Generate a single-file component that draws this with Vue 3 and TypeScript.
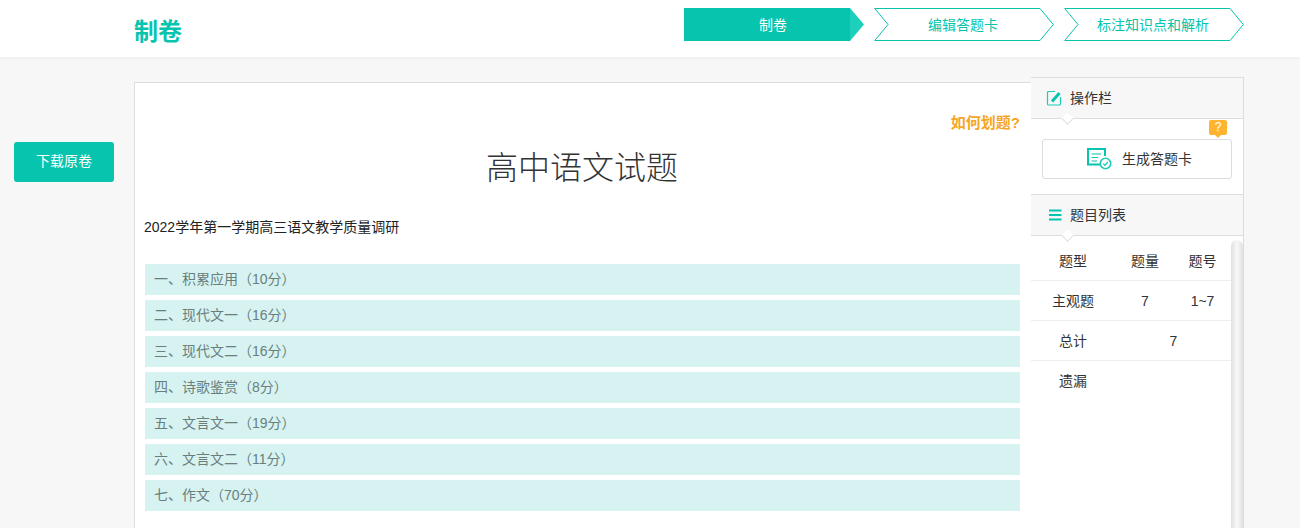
<template>
  <div class="page">
    <header class="top">
      <h1 class="logo">制卷</h1>
      <ol class="steps">
        <li v-for="(s, i) in steps" :key="s" class="step" :class="{ on: i === 0 }">
          <svg v-if="i === 0" class="shape" viewBox="0 0 180 33" width="180" height="33">
            <rect x="0" y="0" width="166" height="33" fill="#06c4ae" />
            <path d="M166 0 L180 16.5 L166 33 Z" fill="#1dd0bb" />
          </svg>
          <svg v-else class="shape" viewBox="0 0 180 33" width="180" height="33">
            <path d="M.7 .5 H166 L179.3 16.5 L166 32.5 H.7 L14 16.5 Z" fill="#fff" stroke="#06c4ae" />
          </svg>
          <span class="step-text">{{ s }}</span>
        </li>
      </ol>
    </header>

    <main class="body">
      <div class="left">
        <button class="download"><span>下载原卷</span></button>
      </div>

      <section class="paper">
        <a class="how">如何划题?</a>
        <h2 class="title">高中语文试题</h2>
        <p class="sub">2022学年第一学期高三语文教学质量调研</p>
        <div class="parts">
          <div v-for="p in parts" :key="p" class="part">{{ p }}</div>
        </div>
      </section>

      <aside class="side">
        <div class="side-head">
          <svg class="ico" width="16" height="16" viewBox="0 0 16 16">
            <path d="M9 1.5 H2.5 A1 1 0 0 0 1.5 2.5 V14 A1 1 0 0 0 2.5 15 H13.5 A1 1 0 0 0 14.5 14 V7" fill="none" stroke="#1dcdb9" stroke-width="1.2" />
            <path d="M6 11.5 L13.5 3" stroke="#06c4ae" stroke-width="3" />
          </svg>
          <span class="head-text">操作栏</span>
        </div>
        <div class="action">
          <span class="tip">?</span>
          <button class="make">
            <svg width="25" height="22" viewBox="0 0 25 22">
              <path d="M15 16.5 H1 V1 H18 V8" fill="none" stroke="#06c4ae" stroke-width="2" />
              <path d="M4.5 6 H14 M4.5 9.5 H11 M4.5 13 H10" stroke="#06c4ae" stroke-width="1.2" />
              <circle cx="18.5" cy="15.5" r="5.2" fill="#fff" stroke="#1dcdb9" stroke-width="1.6" />
              <path d="M16.3 15.6 L18 17.3 L20.8 13.8" fill="none" stroke="#06c4ae" stroke-width="1.2" />
            </svg>
            <span class="make-text">生成答题卡</span>
          </button>
        </div>
        <div class="side-head second">
          <svg class="ico" width="16" height="16" viewBox="0 0 16 16">
            <path d="M3 3.5 H15.5 M3 8 H15.5 M3 12.5 H15.5" stroke="#06c4ae" stroke-width="2" />
          </svg>
          <span class="head-text">题目列表</span>
        </div>
        <div class="list">
          <div class="table">
            <div class="row">
              <span>题型</span><span>题量</span><span>题号</span>
            </div>
            <div class="row">
              <span>主观题</span><span>7</span><span>1~7</span>
            </div>
            <div class="row">
              <span>总计</span><span class="wide">7</span>
            </div>
            <div class="row">
              <span>遗漏</span>
            </div>
          </div>
          <div class="scroll"></div>
        </div>
      </aside>
    </main>
  </div>
</template>

<script setup lang="ts">
const steps: string[] = ['制卷', '编辑答题卡', '标注知识点和解析']

const parts: string[] = [
  '一、积累应用（10分）',
  '二、现代文一（16分）',
  '三、现代文二（16分）',
  '四、诗歌鉴赏（8分）',
  '五、文言文一（19分）',
  '六、文言文二（11分）',
  '七、作文（70分）'
]
</script>

<style scoped>
.page {
  height: 528px;
  overflow: hidden;
  background: #f7f7f7;
  color: #333;
  font-family: "Liberation Sans", "Noto Sans CJK SC", sans-serif;
  font-size: 14px;
  text-spacing-trim: space-all;
}

.top {
  height: 57px;
  box-sizing: border-box;
  padding: 8px 56px 0 134px;
  display: flex;
  justify-content: space-between;
  background: #fff;
  box-shadow: 0 1px 4px rgba(0, 0, 0, 0.05);
  position: relative;
}

.logo {
  margin: 7px 0 0;
  font-size: 24px;
  line-height: 34px;
  font-weight: 700;
  color: #06c4ae;
}

.steps {
  display: flex;
  gap: 10px;
  list-style: none;
  margin: 0;
  padding: 0;
}

.step {
  position: relative;
  width: 180px;
  height: 33px;
  line-height: 35px;
  text-align: center;
  color: #06c4ae;
}

.step.on {
  color: #fff;
}

.shape {
  position: absolute;
  left: 0;
  top: 0;
}

.step-text {
  position: relative;
  left: -1px;
}

.body {
  display: flex;
  align-items: flex-start;
}

.left {
  width: 134px;
  box-sizing: border-box;
  padding: 85px 0 0 14px;
}

.download {
  display: block;
  width: 100px;
  height: 40px;
  padding: 0 0 5px 0;
  border: none;
  border-radius: 3px;
  background: #06c4ae;
  color: #fff;
  font: inherit;
}

.paper {
  width: 897px;
  height: 500px;
  box-sizing: border-box;
  margin-top: 25px;
  padding: 21px 11px 0 9px;
  background: #fff;
  border: 1px solid #ddd;
  border-right: none;
}

.how {
  display: block;
  text-align: right;
  color: #f5a623;
  font-size: 15px;
  font-weight: 700;
  line-height: 38px;
}

.title {
  margin: 1px 0 0;
  text-align: center;
  font-size: 32px;
  line-height: 50px;
  font-weight: 300;
  color: #333;
}

.sub {
  margin: 22px 0 0;
  line-height: 24px;
  color: #222;
}

.parts {
  margin: 25px 0 0 1px;
  display: flex;
  flex-direction: column;
  gap: 5px;
}

.part {
  height: 31px;
  line-height: 31px;
  padding-left: 9px;
  background: #d6f3f2;
  color: #6a7f7d;
}

.side {
  width: 213px;
  height: 480px;
  margin-top: 20px;
  box-sizing: border-box;
  background: #fff;
  border-top: 1px solid #ddd;
  border-right: 1px solid #ddd;
}

.side-head {
  position: relative;
  height: 41px;
  box-sizing: border-box;
  padding-left: 15px;
  display: flex;
  align-items: center;
  gap: 8px;
  background: #f7f7f7;
  border-bottom: 1px solid #ddd;
}

.head-text {
  position: relative;
  top: -1px;
}

.side-head.second {
  height: 42px;
  border-top: 1px solid #ddd;
}

.side-head::after {
  content: "";
  position: absolute;
  left: 32px;
  bottom: -5px;
  width: 8px;
  height: 8px;
  background: #fff;
  border-right: 1px solid #ddd;
  border-bottom: 1px solid #ddd;
  transform: rotate(45deg);
}

.action {
  position: relative;
  height: 75px;
  padding: 20px 11px 0;
  box-sizing: border-box;
}

.tip {
  position: absolute;
  left: 178px;
  top: 1px;
  width: 18px;
  height: 15px;
  border-radius: 2px;
  background: #ffb431;
  color: #fff;
  font-size: 12px;
  line-height: 15px;
  text-align: center;
}

.tip::after {
  content: "";
  position: absolute;
  left: 6px;
  top: 15px;
  border: 3px solid transparent;
  border-top-color: #ffb431;
  border-bottom: none;
}

.make {
  width: 190px;
  height: 40px;
  display: flex;
  align-items: center;
  justify-content: center;
  gap: 10px;
  padding: 0 0 0 5px;
  background: #fff;
  border: 1px solid #ddd;
  border-radius: 3px;
  font: inherit;
  color: #333;
}

.make-text {
  position: relative;
  top: -1px;
}

.list {
  display: flex;
}

.table {
  width: 200px;
}

.row {
  height: 40px;
  display: grid;
  grid-template-columns: 84px 60px 55px;
  align-items: center;
  text-align: center;
  border-bottom: 1px solid #eee;
  box-sizing: border-box;
}

.row span:first-child {
  position: relative;
  top: -1px;
}

.row:first-child {
  height: 45px;
  padding-top: 3px;
}

.row:first-child span {
  top: 0;
}

.row:last-child {
  border-bottom: none;
}

.row .wide {
  grid-column: 2 / 4;
  padding-left: 2px;
}

.scroll {
  width: 12px;
  height: 300px;
  margin-top: 4px;
  border-radius: 6px 6px 0 0;
  background: linear-gradient(to right, #e0e0e0, #f8f8f8 50%, #e0e0e0);
}
</style>

<style>
html,
body {
  background: #f7f7f7;
}
</style>
